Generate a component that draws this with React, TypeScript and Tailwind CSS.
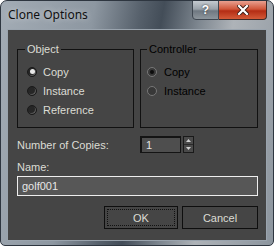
import React from "react";

const objectOptions = [
  { label: "Copy", checked: true },
  { label: "Instance", checked: false },
  { label: "Reference", checked: false },
];

const controllerOptions = [
  { label: "Copy", checked: true },
  { label: "Instance", checked: false },
];

function Radio({ checked, disabled }: { checked: boolean; disabled?: boolean }) {
  if (disabled) {
    return (
      <span className="w-[10px] h-[10px] rounded-full shrink-0 border border-[#777] bg-[#383838] flex items-center justify-center">
        {checked && <span className="w-[4px] h-[4px] rounded-full bg-[#0c0c0c]" />}
      </span>
    );
  }
  return (
    <span className="w-[10px] h-[10px] rounded-full shrink-0 border border-[#1a1a1a] bg-[#262626] shadow-[inset_-1px_-1px_0_#5a5a5a] flex items-center justify-center">
      {checked && <span className="w-[5px] h-[5px] rounded-full bg-[#e8e8e8]" />}
    </span>
  );
}

export default function App() {
  return (
    <div
      className="w-[274px] h-[246px] rounded-t-[7px] rounded-b-[5px] border border-[#2e3640] bg-[linear-gradient(100deg,#a3acb5_0%,#8d97a1_30%,#56606b_45%,#434d58_52%,#7e8790_64%,#aeb3b8_75%,#8c959e_100%)] flex flex-col overflow-hidden"
      style={{ fontFamily: '"Liberation Sans", Arial, sans-serif' }}
    >
      {/* title bar */}
      <div className="h-[28px] flex justify-between shrink-0">
        <span
          className="pl-[7px] pt-[6px] text-[12px] leading-[16px] text-[#101010] [text-shadow:0_0_6px_rgba(255,255,255,0.6)]"
          style={{ fontFamily: '"Noto Sans", "Open Sans", sans-serif' }}
        >
          Clone Options
        </span>
        <div className="flex mr-[6px] -mt-px h-[20px]">
          <div className="w-[27px] border border-[#3e4650] rounded-bl-[4px] bg-[linear-gradient(#c4cad0,#9aa2aa_45%,#6f7881_55%,#8d959c)] flex items-center justify-center text-white font-bold text-[12px] [text-shadow:0_0_2px_#222]">
            ?
          </div>
          <div className="w-[48px] border border-l-0 border-[#3e2a28] rounded-br-[4px] bg-[linear-gradient(#e8a090,#d0563a_45%,#b42d14_55%,#d45a38)] flex items-center justify-center">
            <svg width="12" height="10" viewBox="0 0 12 10">
              <path d="M2 1 L10 9 M10 1 L2 9" stroke="#3a1a14" strokeWidth="4" strokeLinecap="square" />
              <path d="M2 1 L10 9 M10 1 L2 9" stroke="#ffffff" strokeWidth="2.2" strokeLinecap="square" />
            </svg>
          </div>
        </div>
      </div>

      {/* client area */}
      <div className="ml-[6px] w-[260px] h-[212px] border border-[#9aa4ae] bg-[#454545] text-[11px] leading-[14px] text-[#dcdcd4] px-[9px] pt-[19px]">
        <div className="grid grid-cols-[117px_118px] gap-x-[6px]">
          <div className="relative h-[79px] border border-[#111] pl-[9px] pt-[12px] flex flex-col">
            <span className="absolute left-[7px] -top-[8px] px-[2px] bg-[#454545]">Object</span>
            {objectOptions.map((o) => (
              <div key={o.label} className="h-[19px] flex items-center gap-[6px]">
                <Radio checked={o.checked} />
                <span>{o.label}</span>
              </div>
            ))}
          </div>
          <div className="relative h-[79px] border border-[#111] pl-[6px] pt-[12px] flex flex-col">
            <span className="absolute left-[6px] -top-[8px] px-[2px] bg-[#454545] text-black">Controller</span>
            {controllerOptions.map((o) => (
              <div key={o.label} className="h-[19px] flex items-center gap-[7px]">
                <Radio checked={o.checked} disabled />
                <span className="text-black">{o.label}</span>
              </div>
            ))}
          </div>

          <div className="mt-[8px] h-[17px] flex items-center">Number of Copies:</div>
          <div className="mt-[8px] h-[17px] flex gap-[2px]">
            <div className="w-[41px] border-t-2 border-l-2 border-b border-r border-[#141414] bg-[#4e4e4e] pl-[4px] flex items-center text-[#e4e4e4]">
              1
            </div>
            <div className="w-[11px] border border-[#1a1a1a] bg-[#4a4a4a] flex flex-col">
              <div className="flex-1 flex items-center justify-center border-b border-[#2a2a2a]">
                <svg width="5" height="3" viewBox="0 0 5 3"><path d="M0 3 L2.5 0 L5 3 Z" fill="#d0d0d0" /></svg>
              </div>
              <div className="flex-1 flex items-center justify-center">
                <svg width="5" height="3" viewBox="0 0 5 3"><path d="M0 0 L2.5 3 L5 0 Z" fill="#d0d0d0" /></svg>
              </div>
            </div>
          </div>
        </div>

        <div className="mt-[7px]">Name:</div>
        <div className="mt-[2px] h-[20px] w-[241px] border border-[#eeeeee] bg-[#575757] pl-[4px] flex items-center text-[#e6e6e6]">
          golf001
        </div>

        <div className="mt-[10px] flex justify-end gap-[4px] w-[241px]">
          <button className="w-[74px] h-[23px] border border-[#0e0e0e] bg-[#454545] p-[2px] text-[#dcdcd4]">
            <span className="w-full h-full border border-dotted border-[#111] flex items-center justify-center">OK</span>
          </button>
          <button className="w-[76px] h-[23px] border border-[#0e0e0e] bg-[#454545] text-[#dcdcd4] flex items-center justify-center">
            Cancel
          </button>
        </div>
      </div>
    </div>
  );
}
